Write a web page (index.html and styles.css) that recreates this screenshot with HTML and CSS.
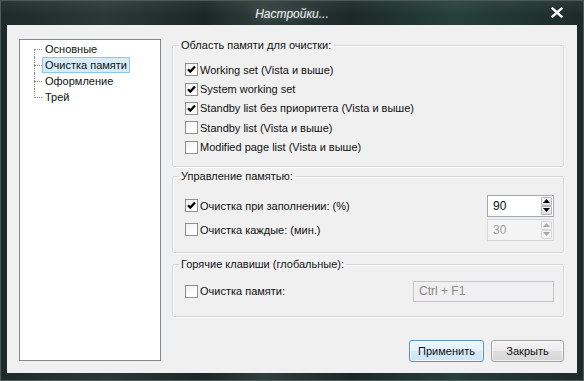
FILE: index.html
```html
<!DOCTYPE html>
<html lang="ru">
<head>
<meta charset="utf-8">
<title>Настройки...</title>
<link rel="stylesheet" href="styles.css">
</head>
<body>
<div class="window">
  <div class="titlebar">
    <span></span>
    <span class="title">Настройки...</span>
    <span class="close"><svg width="12" height="11" viewBox="0 0 12 11"><path d="M1.5 1.5 L10.5 9.5 M10.5 1.5 L1.5 9.5" stroke="#1a2424" stroke-width="4" stroke-linecap="square"/><path d="M1.5 1.5 L10.5 9.5 M10.5 1.5 L1.5 9.5" stroke="#fff" stroke-width="2.4" stroke-linecap="square"/></svg></span>
  </div>
  <div class="client">
    <ul class="tree">
      <li class="item first"><span class="node">Основные</span></li>
      <li class="item"><span class="node selected">Очистка памяти</span></li>
      <li class="item"><span class="node">Оформление</span></li>
      <li class="item last"><span class="node">Трей</span></li>
    </ul>
    <div class="main">
      <fieldset class="group g1">
        <legend>Область памяти для очистки:</legend>
        <label class="check"><span class="box"><svg width="11" height="11" viewBox="0 0 11 11"><path d="M2 5.2 L4.3 7.6 L9 2.4" fill="none" stroke="#000" stroke-width="2.2"/></svg></span>Working set (Vista и выше)</label>
        <label class="check"><span class="box"><svg width="11" height="11" viewBox="0 0 11 11"><path d="M2 5.2 L4.3 7.6 L9 2.4" fill="none" stroke="#000" stroke-width="2.2"/></svg></span>System working set</label>
        <label class="check"><span class="box"><svg width="11" height="11" viewBox="0 0 11 11"><path d="M2 5.2 L4.3 7.6 L9 2.4" fill="none" stroke="#000" stroke-width="2.2"/></svg></span>Standby list без приоритета (Vista и выше)</label>
        <label class="check"><span class="box"></span>Standby list (Vista и выше)</label>
        <label class="check"><span class="box"></span>Modified page list (Vista и выше)</label>
      </fieldset>
      <fieldset class="group g2">
        <legend>Управление памятью:</legend>
        <div class="row">
          <label class="check"><span class="box"><svg width="11" height="11" viewBox="0 0 11 11"><path d="M2 5.2 L4.3 7.6 L9 2.4" fill="none" stroke="#000" stroke-width="2.2"/></svg></span>Очистка при заполнении: (%)</label>
          <div class="spin"><span class="val">90</span><span class="arrows"><span class="arr"><svg width="7" height="4" viewBox="0 0 7 4"><path d="M0 4 L3.5 0 L7 4 Z" fill="#000"/></svg></span><span class="arr"><svg width="7" height="4" viewBox="0 0 7 4"><path d="M0 0 L3.5 4 L7 0 Z" fill="#000"/></svg></span></span></div>
        </div>
        <div class="row">
          <label class="check"><span class="box"></span>Очистка каждые: (мин.)</label>
          <div class="spin disabled"><span class="val">30</span><span class="arrows"><span class="arr"><svg width="7" height="4" viewBox="0 0 7 4"><path d="M0 4 L3.5 0 L7 4 Z" fill="#a8a8a8"/></svg></span><span class="arr"><svg width="7" height="4" viewBox="0 0 7 4"><path d="M0 0 L3.5 4 L7 0 Z" fill="#a8a8a8"/></svg></span></span></div>
        </div>
      </fieldset>
      <fieldset class="group g3">
        <legend>Горячие клавиши (глобальные):</legend>
        <div class="row">
          <label class="check"><span class="box"></span>Очистка памяти:</label>
          <div class="hotkey">Ctrl + F1</div>
        </div>
      </fieldset>
      <div class="buttons">
        <button class="btn default">Применить</button>
        <button class="btn">Закрыть</button>
      </div>
    </div>
  </div>
</div>
</body>
</html>
```
FILE: styles.css
```css
* { box-sizing: border-box; }
html, body { margin: 0; padding: 0; }
body {
  width: 584px;
  height: 381px;
  overflow: hidden;
  font-family: "Liberation Sans", Arial, sans-serif;
  font-size: 11px;
  color: #111;
  background: #1b2828;
}
.window {
  width: 584px;
  height: 381px;
  display: flex;
  flex-direction: column;
  border: 1px solid #4c5a58;
  background:
    linear-gradient(180deg, rgba(255,255,255,0.06) 0, rgba(255,255,255,0) 14px),
    linear-gradient(90deg, #1c2a29 0, #2a3937 18%, #1a2726 35%, #2f3f3c 45%, #1b2827 60%, #26403b 78%, #1c2a29 100%);
}
.titlebar {
  height: 24px;
  flex: none;
  display: grid;
  grid-template-columns: 1fr auto 1fr;
  align-items: center;
}
.title {
  font-style: italic;
  font-size: 12px;
  color: #f2f6f6;
  text-shadow: 0 0 6px rgba(255,255,255,0.35);
  padding-top: 1px;
}
.close {
  justify-self: end;
  margin-right: 20px;
  display: flex;
  margin-top: -1px;
}
.client {
  flex: none;
  margin: 0 6px;
  height: 348px;
  background: #f0f0f0;
  display: flex;
  padding: 14px 13px 0 12px;
  gap: 11px;
}
.tree {
  list-style: none;
  margin: 0;
  width: 142px;
  height: 322px;
  flex: none;
  background: #fff;
  border: 1px solid #828790;
  padding: 1px 0 0 22px;
}
.item {
  position: relative;
  height: 16px;
  display: flex;
  align-items: center;
}
.item::before {
  content: "";
  position: absolute;
  left: -8px;
  top: 8px;
  width: 8px;
  border-top: 1px dotted #8a8a8a;
}
.item::after {
  content: "";
  position: absolute;
  left: -8px;
  top: 0;
  height: 16px;
  border-left: 1px dotted #8a8a8a;
}
.item.first::after { top: 8px; height: 8px; }
.item.last::after { height: 9px; }
.node {
  padding: 0 2px 0 2px;
  height: 16px;
  line-height: 14px;
  border: 1px solid transparent;
}
.node.selected {
  background: #d6edf9;
  border-color: #8ec8e6;
}
.main {
  width: 392px;
  flex: none;
  display: flex;
  flex-direction: column;
}
.group {
  margin: 0;
  min-width: 0;
  border: 1px solid #d5d5d5;
  box-shadow: inset 1px 1px 0 #fff, 1px 1px 0 #fff;
  border-radius: 2px;
  padding: 0 9px 0 12px;
}
.group legend {
  padding: 0 2px;
  margin-left: -6px;
  line-height: 13px;
  height: 13px;
}
.g1 { margin-top: 0; padding-top: 8px; padding-bottom: 9px; }
.g1 .check { height: 19.4px; }
.g2 { margin-top: 3px; padding-top: 12px; padding-bottom: 11px; display: flex; flex-direction: column; gap: 2px; }
.g3 { margin-top: 5px; padding-top: 10px; padding-bottom: 14px; }
.check {
  display: flex;
  align-items: center;
  gap: 2px;
}
.box {
  width: 13px;
  height: 13px;
  flex: none;
  border: 1px solid #8e8f8f;
  background: linear-gradient(135deg, #f0f0f0 0, #fff 70%);
  display: flex;
  align-items: center;
  justify-content: center;
}
.row {
  display: flex;
  align-items: center;
  justify-content: space-between;
  height: 22px;
}
.g3 .row { height: 21px; }
.spin {
  width: 67px;
  height: 22px;
  background: #fff;
  border: 1px solid #a3a9b1;
  display: flex;
  align-items: center;
  justify-content: space-between;
}
.spin .val { padding-left: 5px; font-size: 12px; }
.arrows {
  align-self: stretch;
  display: flex;
  flex-direction: column;
  padding: 1px 1px 1px 0;
  width: 12px;
}
.arr {
  flex: 1;
  display: flex;
  align-items: center;
  justify-content: center;
  border: 1px solid #b4b4b4;
  background: linear-gradient(#f6f6f6, #dedede);
  border-radius: 1px;
}
.spin.disabled {
  background: #f4f4f4;
  border-color: #d3d6da;
  color: #a0a0a0;
}
.spin.disabled .arr {
  border-color: #d8d8d8;
  background: #f4f4f4;
}
.hotkey {
  width: 141px;
  height: 21px;
  border: 1px solid #c4c6c9;
  background: #f0f0f0;
  color: #8a8a8a;
  font-size: 12px;
  padding-left: 5px;
  display: flex;
  align-items: center;
}
.buttons {
  margin-top: 23px;
  display: flex;
  justify-content: flex-end;
  gap: 7px;
}
.btn {
  font-family: inherit;
  font-size: 11px;
  height: 22px;
  width: 73px;
  padding: 0;
  color: #111;
  border: 1px solid #a2a2a2;
  border-radius: 3px;
  background: linear-gradient(#f4f4f4 0, #ececec 50%, #dedede 51%, #d6d6d6 100%);
  box-shadow: inset 0 0 0 1px rgba(255,255,255,0.7);
}
.btn.default {
  width: 75px;
  border-color: #5b93c4;
  background: linear-gradient(#eef6fc 0, #e4f0fa 50%, #d6eaf8 51%, #cde4f5 100%);
}
```
